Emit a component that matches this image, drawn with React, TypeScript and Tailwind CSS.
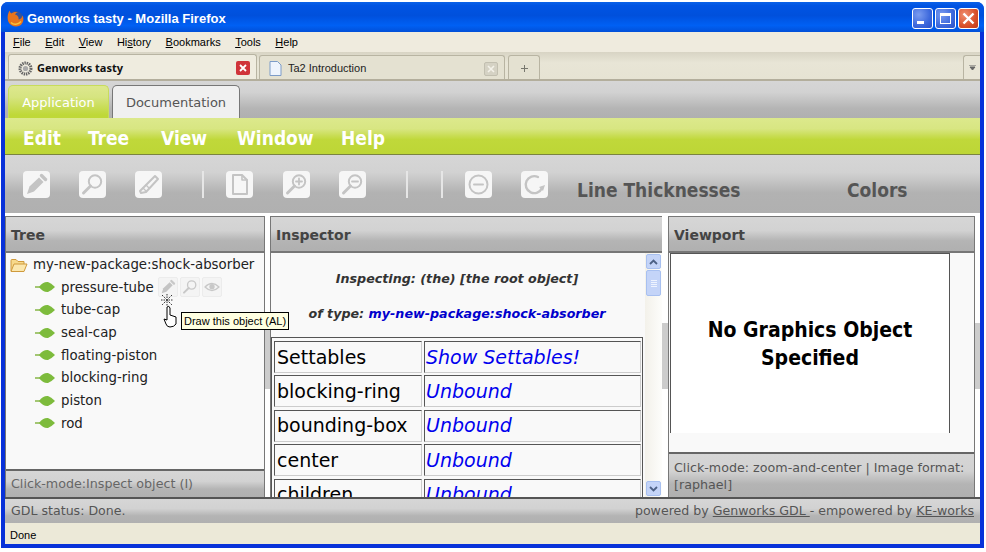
import React from "react";

const sans = "font-['DejaVu_Sans',sans-serif]";
const tahoma = "font-['Noto_Sans','Liberation_Sans',sans-serif]";
const arial = "font-['Liberation_Sans',sans-serif]";
const grayGrad = "bg-[linear-gradient(#d6d6d6_0%,#d2d2d2_40%,#b4b4b4_70%,#b0b0b0_100%)]";

function ToolBtn({ children, className = "" }: { children: React.ReactNode; className?: string }) {
  return (
    <div className={`w-[27px] h-[27px] rounded-[4px] bg-[#f6f6f6] shrink-0 ${className}`}>
      <svg viewBox="0 0 27 27" width="27" height="27" fill="none" stroke="#c4c4c4" strokeWidth="2.4" strokeLinecap="round" strokeLinejoin="round">
        {children}
      </svg>
    </div>
  );
}
const Mag = ({ inner }: { inner?: React.ReactNode }) => (
  <>
    <circle cx="16" cy="10.5" r="6.2" strokeWidth="2" />
    <path d="M11.5 15 L4.5 22" strokeWidth="3" />
    {inner}
  </>
);
const Sep = ({ className = "" }: { className?: string }) => <div className={`w-[2px] h-[27px] bg-[#e6e6e6] shrink-0 ${className}`} />;

function Pencil() {
  return (
    <>
      <path d="M4 23 L6.5 15.5 L16 6.5 L20.5 11 L11 20.5 Z" fill="#c4c4c4" stroke="none" />
      <path d="M18.5 4.5 L22.5 8.5" strokeWidth="3.4" />
    </>
  );
}

function Leaf() {
  return (
    <svg width="20" height="12" viewBox="0 0 20 12" className="shrink-0">
      <path d="M0 6 H6" stroke="#7fb03a" strokeWidth="1.4" />
      <path d="M4 6 Q8 0.5 13 1 Q16 2 20 6 Q16 10 13 11 Q8 11.5 4 6 Z" fill="#7dbb3c" />
    </svg>
  );
}

function TreeRow({ label, children }: { label: string; children?: React.ReactNode }) {
  return (
    <div className="flex items-center h-[22.7px] pl-[29px]">
      <Leaf />
      <span className="ml-[6px] text-[13.33px] text-[#222] leading-none">{label}</span>
      {children}
    </div>
  );
}

function MiniBtn({ children }: { children: React.ReactNode }) {
  return (
    <div className="w-[20px] h-[20px] rounded-[2px] bg-[#f4f4f4] border border-[#ececec] shrink-0">
      <svg viewBox="0 0 27 27" width="18" height="18" fill="none" stroke="#c8c8c8" strokeWidth="2.6" strokeLinecap="round" strokeLinejoin="round">
        {children}
      </svg>
    </div>
  );
}

function PanelHeader({ title }: { title: string }) {
  return (
    <div className={`h-[36px] shrink-0 ${grayGrad} border-b-2 border-[#777] flex items-center pl-[5px] pt-[2px] text-[14px] font-bold text-[#444]`}>
      {title}
    </div>
  );
}

function Cell({ children, link, w }: { children: React.ReactNode; link?: boolean; w: string }) {
  return (
    <div
      className={`${w} h-[32px] shrink-0 border border-t-[#555] border-l-[#555] border-r-[#ccc] border-b-[#ccc] flex items-center text-[19px] leading-none whitespace-nowrap ${
        link ? "pl-[1px] italic text-[#0000ee]" : "pl-[2px] text-black"
      }`}
    >
      {children}
    </div>
  );
}

function Row({ a, b }: { a: string; b: string }) {
  return (
    <div className="flex gap-[2px] mb-[2.4px]">
      <Cell w="w-[148px]">{a}</Cell>
      <Cell w="w-[217px]" link>{b}</Cell>
    </div>
  );
}

function XpBtn({ children, red }: { children: React.ReactNode; red?: boolean }) {
  return (
    <div
      className={`w-[21px] h-[21px] rounded-[3px] border border-white flex items-center justify-center ${
        red
          ? "bg-[radial-gradient(circle_at_30%_30%,#f09070,#d8502a_60%,#c03a1a)]"
          : "bg-[radial-gradient(circle_at_30%_30%,#7a9cf0,#3c68dc_60%,#2a50c8)]"
      }`}
    >
      {children}
    </div>
  );
}

function Splitter() {
  return (
    <div className="flex flex-col bg-white h-full">
      <div className="h-[107px] shrink-0" />
      <div className="h-[66px] shrink-0 bg-[#cccccc]" />
    </div>
  );
}

export default function App() {
  return (
    <div className={`w-[986px] h-[552px] bg-white pt-[2px] pl-[1px] overflow-hidden ${sans}`}>
      <div className="w-[983px] h-[546px] rounded-t-[7px] bg-[#0831d9] flex flex-col overflow-hidden">
        {/* Title bar */}
        <div className="h-[30px] shrink-0 bg-[linear-gradient(#0a62e8_0%,#0054e3_12%,#0050dc_45%,#0060f4_78%,#0250d8_100%)] flex items-center pl-[6px] pr-[5px] pt-[3px]">
          <svg width="17" height="17" viewBox="0 0 17 17" className="shrink-0">
            <circle cx="8.5" cy="8.5" r="7.6" fill="#31549f" />
            <path d="M2.5 0.5 C3 2 3.5 3 4.5 3.5 C6 2 9 1.5 11 2.5 C9.5 2.6 8.5 3.4 8 4.5 C10.5 5 12 7 11.5 9.5 C13 9.5 15 8 15.5 5.5 C17.5 9.5 16 14 12.5 15.8 C8.5 17.5 3.5 16 1.5 12 C0 9 0.5 4 2.5 0.5 Z" fill="#e8741c" />
            <path d="M4 12.5 C6.5 15.2 11 15 14 11.5" stroke="#f9c23c" strokeWidth="1.5" fill="none" />
          </svg>
          <span className={`ml-[3px] text-[13px] font-bold text-white whitespace-nowrap ${arial}`}>Genworks tasty - Mozilla Firefox</span>
          <div className="ml-auto flex gap-[2px]">
            <XpBtn><div className="w-[7px] h-[3px] bg-white mt-[8px] mr-[4px]" /></XpBtn>
            <XpBtn><div className="w-[11px] h-[11px] border border-white border-t-[3px]" /></XpBtn>
            <XpBtn red>
              <svg width="13" height="13" viewBox="0 0 13 13"><path d="M1.5 1.5 L11.5 11.5 M11.5 1.5 L1.5 11.5" stroke="#fff" strokeWidth="2.4" /></svg>
            </XpBtn>
          </div>
        </div>

        <div className="mx-[4px] w-[975px] h-[512px] flex flex-col bg-white overflow-hidden">
          {/* Firefox menu */}
          <div className={`h-[20px] shrink-0 bg-[#efebde] flex items-center pl-[8px] gap-[14.5px] text-[11px] text-black leading-none ${arial}`}>
            <span><u>F</u>ile</span>
            <span><u>E</u>dit</span>
            <span><u>V</u>iew</span>
            <span>Hi<u>s</u>tory</span>
            <span><u>B</u>ookmarks</span>
            <span><u>T</u>ools</span>
            <span><u>H</u>elp</span>
          </div>
          {/* Firefox tabs */}
          <div className={`h-[29px] shrink-0 bg-[linear-gradient(#d8d4c4_0%,#e8e5d6_40%,#e6e3d3_100%)] border-b-2 border-[#b3ae9c] flex items-end pl-[3px] text-[11px] ${tahoma}`}>
            <div className="w-[249px] h-[25px] pt-[2px] bg-[#efecdf] border border-b-0 border-[#b8b4a2] rounded-t-[3px] flex items-center pl-[9px] pr-[6px]">
              <svg width="15" height="15" viewBox="0 0 15 15" className="shrink-0">
                <circle cx="7.5" cy="7.5" r="5.5" fill="none" stroke="#666" strokeWidth="3" strokeDasharray="1.4 0.8" />
                <circle cx="7.5" cy="7.5" r="2.6" fill="#aaa" />
              </svg>
              <span className="ml-[4px] font-bold text-[#111]">Genworks tasty</span>
              <div className="ml-auto w-[14px] h-[14px] rounded-[2px] bg-[#d0343a] flex items-center justify-center">
                <svg width="8" height="8" viewBox="0 0 8 8"><path d="M1 1 L7 7 M7 1 L1 7" stroke="#fff" strokeWidth="1.8" /></svg>
              </div>
            </div>
            <div className="ml-[2px] w-[246px] h-[24px] pt-[2px] bg-[#e4e1d1] border border-b-0 border-[#b8b4a2] rounded-t-[3px] flex items-center pl-[9px] pr-[6px]">
              <svg width="13" height="15" viewBox="0 0 13 15" className="shrink-0">
                <path d="M1 .5 H8.5 L12 4 V14.5 H1 Z" fill="#eef4fd" stroke="#7d9cc8" />
              </svg>
              <span className={`ml-[6px] text-[#222] ${arial}`}>Ta2 Introduction</span>
              <div className="ml-auto w-[14px] h-[14px] rounded-[2px] bg-[#d5d2c4] border border-[#c2bfb0] flex items-center justify-center">
                <svg width="8" height="8" viewBox="0 0 8 8"><path d="M1 1 L7 7 M7 1 L1 7" stroke="#f4f2ea" strokeWidth="1.6" /></svg>
              </div>
            </div>
            <div className="ml-[3px] w-[32px] h-[24px] pt-[2px] bg-[#e4e1d1] border border-b-0 border-[#b8b4a2] rounded-t-[3px] flex items-center justify-center text-[#888]">
              <svg width="7" height="7" viewBox="0 0 7 7"><path d="M3.5 0 V7 M0 3.5 H7" stroke="#77776e" strokeWidth="1" /></svg>
            </div>
            <div className="ml-auto w-[17px] h-[24px] bg-[#e8e5d6] border border-b-0 border-r-0 border-[#b8b4a2] rounded-tl-[3px] flex items-center justify-center">
              <svg width="7" height="5" viewBox="0 0 7 5"><path d="M0 0 H7 M1 2 H6 L3.5 5 Z" stroke="#666" fill="#666" /></svg>
            </div>
          </div>

          {/* App tabs */}
          <div className="h-[37px] shrink-0 bg-[linear-gradient(#d6d6d6_0%,#d2d2d2_30%,#b4b4b4_75%,#b0b0b0_100%)] flex items-end pl-[3px] gap-[3px] text-[13px]">
            <div className="w-[101px] h-[33px] pt-[2px] rounded-t-[5px] border border-b-0 border-[#c8dc5c] bg-[linear-gradient(#dde88e_0%,#d6e480_35%,#bfd838_90%)] flex items-center justify-center text-white">
              Application
            </div>
            <div className="w-[128px] h-[33px] pt-[2px] rounded-t-[5px] border border-b-0 border-[#777] bg-[#f0f0f0] flex items-center justify-center text-[#555]">
              Documentation
            </div>
          </div>

          {/* Green menu */}
          <div className="h-[37px] shrink-0 pt-[4px] bg-[linear-gradient(#dce98c_0%,#d8e682_30%,#c0d83a_60%,#bdd636_100%)] border-b border-[#7a8440] flex items-center pl-[18px] text-[19px] font-bold font-stretch-condensed text-white leading-none">
            <span className="w-[65px]">Edit</span>
            <span className="w-[73px]">Tree</span>
            <span className="w-[76px]">View</span>
            <span className="w-[104px]">Window</span>
            <span>Help</span>
          </div>

          {/* Toolbar */}
          <div className="h-[58px] shrink-0 bg-[linear-gradient(#d6d6d6_0%,#d2d2d2_30%,#b2b2b2_65%,#b0b0b0_100%)] flex items-center pl-[18px] pt-[1px]">
            <ToolBtn><Pencil /></ToolBtn>
            <ToolBtn className="ml-[29px]"><Mag /></ToolBtn>
            <ToolBtn className="ml-[29px]">
              <path d="M5 20 L20 5 L23 8 L11 21 L6 22 Z" fill="none" strokeWidth="2" />
              <path d="M8 17 L11 20 M11 14 L14 17" strokeWidth="1.4" />
            </ToolBtn>
            <Sep className="ml-[40px]" />
            <ToolBtn className="ml-[22px]">
              <path d="M7 4 H16 L21 9 V23 H7 Z" strokeWidth="2" />
              <path d="M16 4 V9 H21" strokeWidth="1.6" />
            </ToolBtn>
            <ToolBtn className="ml-[30px]"><Mag inner={<path d="M13 10.5 H19 M16 7.5 V13.5" strokeWidth="1.8" />} /></ToolBtn>
            <ToolBtn className="ml-[29px]"><Mag inner={<path d="M13 10.5 H19" strokeWidth="1.8" />} /></ToolBtn>
            <Sep className="ml-[40px]" />
            <Sep className="ml-[33px]" />
            <ToolBtn className="ml-[22px]">
              <circle cx="13.5" cy="13.5" r="9" strokeWidth="2" />
              <path d="M9 13.5 H18" strokeWidth="2" />
            </ToolBtn>
            <ToolBtn className="ml-[29px]">
              <path d="M21 17 A8.5 8.5 0 1 1 17 6" strokeWidth="2.4" />
              <path d="M18 16 L22 20 L24 14 Z" fill="#c4c4c4" stroke="none" />
            </ToolBtn>
            <span className="ml-[29px] w-[161px] text-[19px] font-bold font-stretch-condensed text-[#555] whitespace-nowrap mt-[12px]">Line Thicknesses</span>
            <span className="ml-[109px] text-[19px] font-bold font-stretch-condensed text-[#555] whitespace-nowrap mt-[12px]">Colors</span>
          </div>

          {/* Panels */}
          <div className="flex-1 min-h-0 pt-[3px] flex bg-white">
            {/* Tree */}
            <div className="w-[260px] shrink-0 h-[281px] border border-b-0 border-[#777] bg-[#f9f9f9] flex flex-col overflow-hidden">
              <PanelHeader title="Tree" />
              <div className="flex-1 min-h-0 pt-[1px]">
                <div className="flex items-center h-[22px] pl-[4px]">
                  <svg width="18" height="15" viewBox="0 0 18 15" className="shrink-0">
                    <path d="M1 13 V2.5 Q1 1.5 2 1.5 H6 L8 3.5 H14 V6" fill="#f7d98b" stroke="#cf9a3c" />
                    <path d="M1 13.5 L4 6 H17 L14 13.5 Z" fill="#fbe7ae" stroke="#cf9a3c" />
                  </svg>
                  <span className="ml-[5px] text-[13.33px] text-[#222] leading-none whitespace-nowrap">my-new-package:shock-absorber</span>
                </div>
                <TreeRow label="pressure-tube">
                  <div className="ml-[4px] flex gap-[2px]">
                    <MiniBtn><Pencil /></MiniBtn>
                    <MiniBtn><Mag /></MiniBtn>
                    <MiniBtn>
                      <path d="M3 13.5 Q13.5 3 24 13.5 Q13.5 24 3 13.5 Z" strokeWidth="2" />
                      <circle cx="13.5" cy="13" r="4" fill="#c8c8c8" stroke="none" />
                    </MiniBtn>
                  </div>
                </TreeRow>
                <TreeRow label="tube-cap" />
                <TreeRow label="seal-cap" />
                <TreeRow label="floating-piston" />
                <TreeRow label="blocking-ring" />
                <TreeRow label="piston" />
                <TreeRow label="rod" />
              </div>
              <div className={`h-[28px] shrink-0 ${grayGrad} border-t-2 border-[#666] flex items-center pl-[5px] text-[12.7px] text-[#666]`}>
                Click-mode:Inspect object (I)
              </div>
            </div>

            <div className="w-[5px] shrink-0"><Splitter /></div>

            {/* Inspector */}
            <div className="w-[392px] shrink-0 h-[281px] border-t border-l border-[#777] bg-[#f9f9f9] flex flex-col overflow-hidden">
              <PanelHeader title="Inspector" />
              <div className="flex flex-1 min-h-0">
                <div className="w-[373px] shrink-0 overflow-hidden">
                  <div className="h-[84px] text-[12.7px] font-bold italic text-[#333] text-center pr-[1px] leading-none">
                    <div className="pt-[20px]">Inspecting: (the) [the root object]</div>
                    <div className="pt-[22px]">of type: <span className="text-[#0000cc]">my-new-package:shock-absorber</span></div>
                  </div>
                  <div className="w-[372px] border-l border-t border-r border-[#555] pl-[2px] pt-[3px]">
                    <Row a="Settables" b="Show Settables!" />
                    <Row a="blocking-ring" b="Unbound" />
                    <Row a="bounding-box" b="Unbound" />
                    <Row a="center" b="Unbound" />
                    <Row a="children" b="Unbound" />
                  </div>
                </div>
                <div className="w-[17px] shrink-0 bg-[linear-gradient(90deg,#f3f1ea,#fdfdfb)] ml-[1px] flex flex-col pb-[1px] px-[1px]">
                  <div className="h-[15px] mt-[1px] rounded-[2px] bg-[#c4d4f8] border border-[#a8c0f0] flex items-center justify-center">
                    <svg width="9" height="6" viewBox="0 0 9 6"><path d="M1 5 L4.5 1.5 L8 5" stroke="#4d6185" strokeWidth="1.8" fill="none" /></svg>
                  </div>
                  <div className="h-[26px] mt-[1px] rounded-[2px] bg-[#c4d4f8] border border-[#a8c0f0] flex flex-col items-center justify-center gap-[1px]">
                    <div className="w-[6px] h-[1px] bg-[#eef3fe]" />
                    <div className="w-[6px] h-[1px] bg-[#eef3fe]" />
                    <div className="w-[6px] h-[1px] bg-[#eef3fe]" />
                    <div className="w-[6px] h-[1px] bg-[#eef3fe]" />
                  </div>
                  <div className="h-[15px] mt-auto rounded-[2px] bg-[#c4d4f8] border border-[#a8c0f0] flex items-center justify-center">
                    <svg width="9" height="6" viewBox="0 0 9 6"><path d="M1 1 L4.5 4.5 L8 1" stroke="#4d6185" strokeWidth="1.8" fill="none" /></svg>
                  </div>
                </div>
              </div>
            </div>

            <div className="w-[6px] shrink-0"><Splitter /></div>

            {/* Viewport */}
            <div className="w-[307px] shrink-0 h-[281px] border-t border-x border-[#777] bg-[#f9f9f9] flex flex-col overflow-hidden">
              <PanelHeader title="Viewport" />
              <div className="flex-1 min-h-0 pl-[1px]">
                <div className="w-[280px] h-[180px] bg-white border-x border-t border-[#555] flex items-center justify-center text-center text-[21px] leading-[28px] font-bold font-stretch-condensed text-black">
                  <div>No Graphics Object<br />Specified</div>
                </div>
              </div>
              <div className={`h-[45px] shrink-0 ${grayGrad} border-t-2 border-[#666] px-[5px] pt-[5px] text-[12.7px] leading-[17px] text-[#555]`}>
                Click-mode: zoom-and-center | Image format: [raphael]
              </div>
            </div>
            <div className="w-[5px] shrink-0"><Splitter /></div>
          </div>

          {/* GDL status */}
          <div className={`h-[26px] shrink-0 ${grayGrad} border-t-2 border-[#555] flex items-center justify-between pl-[6px] pr-[6px] pt-[1px] text-[12.6px] text-[#555] whitespace-nowrap`}>
            <span>GDL status: Done.</span>
            <span>powered by <u>Genworks GDL </u> - empowered by <u>KE-works</u></span>
          </div>

          {/* Browser status */}
          <div className={`h-[21px] shrink-0 bg-[#ece9d8] flex items-center pl-[5px] pt-[3px] text-[11px] text-black ${arial}`}>Done</div>
        </div>
      </div>

      {/* Hover cursor and tooltip */}
      <div className="absolute left-[160px] top-[294px]">
        <svg width="20" height="34" viewBox="0 0 20 34">
          <path d="M2 1 L12 11 M12 1 L2 11 M7 0 V12 M1 6 H13" stroke="#333" strokeWidth="1" strokeDasharray="1.5 1" />
          <path d="M7 13 Q9 11 10 14 V21 L16 23 V30 Q14 33 10 33 Q7 33 6 30 L4 25 L7 26 Z" fill="#fff" stroke="#000" />
        </svg>
      </div>
      <div className={`absolute left-[181px] top-[312px] h-[18px] px-[2px] bg-[#ffffe1] border border-black flex items-center text-[11px] text-black whitespace-nowrap ${arial}`}>
        Draw this object (AL)
      </div>
    </div>
  );
}
